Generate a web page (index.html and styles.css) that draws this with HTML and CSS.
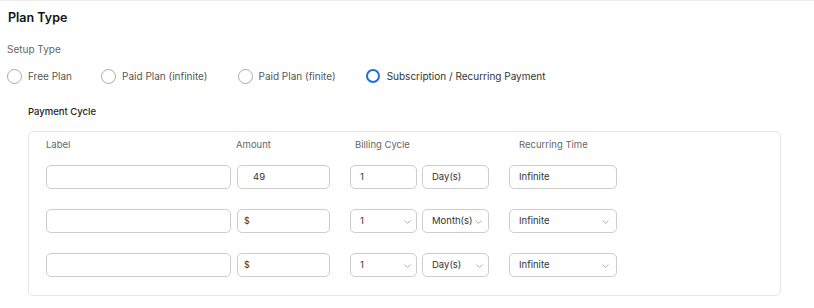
FILE: index.html
```html
<!DOCTYPE html>
<html>
<head>
<meta charset="utf-8">
<link rel="stylesheet" href="styles.css">
</head>
<body>
<div class="page">
  <h1 class="title">Plan Type</h1>
  <div class="setup-label">Setup Type</div>
  <div class="radios">
    <label class="radio"><span class="circle"></span><span class="rtext">Free Plan</span></label>
    <label class="radio"><span class="circle"></span><span class="rtext">Paid Plan (infinite)</span></label>
    <label class="radio"><span class="circle"></span><span class="rtext">Paid Plan (finite)</span></label>
    <label class="radio"><span class="circle checked"></span><span class="rtext">Subscription / Recurring Payment</span></label>
  </div>
  <div class="section">
    <div class="section-title">Payment Cycle</div>
    <div class="box">
      <div class="row head">
        <div class="c-label">Label</div>
        <div class="c-amount">Amount</div>
        <div class="c-billing h-billing">Billing Cycle</div>
        <div class="c-rec h-rec">Recurring Time</div>
      </div>
      <div class="row">
        <div class="c-label field"></div>
        <div class="c-amount field pad-amt">49</div>
        <div class="c-billing">
          <div class="field half">1</div>
          <div class="field half">Day(s)</div>
        </div>
        <div class="c-rec field">Infinite</div>
      </div>
      <div class="row">
        <div class="c-label field"></div>
        <div class="c-amount field pad-dollar">$</div>
        <div class="c-billing">
          <div class="field half sel">1<svg class="chev chev-num" width="7" height="4" viewBox="0 0 7 4"><path d="M0.5 0.5 L3.5 3.3 L6.5 0.5" fill="none" stroke="#a8a8a8" stroke-width="0.9"/></svg></div>
          <div class="field half sel">Month(s)<svg class="chev chev-month" width="7" height="4" viewBox="0 0 7 4"><path d="M0.5 0.5 L3.5 3.3 L6.5 0.5" fill="none" stroke="#a8a8a8" stroke-width="0.9"/></svg></div>
        </div>
        <div class="c-rec field sel">Infinite<svg class="chev chev-rec" width="7" height="4" viewBox="0 0 7 4"><path d="M0.5 0.5 L3.5 3.3 L6.5 0.5" fill="none" stroke="#a8a8a8" stroke-width="0.9"/></svg></div>
      </div>
      <div class="row">
        <div class="c-label field"></div>
        <div class="c-amount field pad-dollar">$</div>
        <div class="c-billing">
          <div class="field half sel">1<svg class="chev chev-num" width="7" height="4" viewBox="0 0 7 4"><path d="M0.5 0.5 L3.5 3.3 L6.5 0.5" fill="none" stroke="#a8a8a8" stroke-width="0.9"/></svg></div>
          <div class="field half sel">Day(s)<svg class="chev chev-day" width="7" height="4" viewBox="0 0 7 4"><path d="M0.5 0.5 L3.5 3.3 L6.5 0.5" fill="none" stroke="#a8a8a8" stroke-width="0.9"/></svg></div>
        </div>
        <div class="c-rec field sel">Infinite<svg class="chev chev-rec" width="7" height="4" viewBox="0 0 7 4"><path d="M0.5 0.5 L3.5 3.3 L6.5 0.5" fill="none" stroke="#a8a8a8" stroke-width="0.9"/></svg></div>
      </div>
    </div>
  </div>
</div>
</body>
</html>
```

FILE: styles.css
```css
* { box-sizing: border-box; }
html, body { margin: 0; padding: 0; background: #fff; }
body {
  font-family: Inter, "Noto Sans", sans-serif;
  color: #333;
  width: 814px;
  height: 308px;
  overflow: hidden;
}
.page {
  border-top: 1px solid #ececec;
  padding: 0 0 0 7px;
}
.title {
  margin: 9px 0 0 1px;
  font-size: 12.5px;
  line-height: 16px;
  font-weight: 600;
  color: #111;
}
.setup-label {
  margin-top: 16px;
  font-size: 10px;
  line-height: 14px;
  color: #666;
}
.radios {
  display: flex;
  align-items: center;
  margin-top: 12px;
  height: 16px;
}
.radio {
  display: flex;
  align-items: center;
  font-size: 10px;
  color: #555;
}
.radio + .radio { margin-left: 29px; }
.radio:nth-child(3) { margin-left: 30px; }
.circle {
  width: 15px;
  height: 15px;
  border: 1px solid #a9a9a9;
  border-radius: 50%;
  margin-right: 6px;
}
.circle.checked {
  width: 14px;
  height: 14px;
  border: 2.5px solid #1d6fd6;
}
.radio:nth-child(4) { margin-left: 30px; }
.radio:nth-child(4) .circle { margin-right: 7px; }
.radio:nth-child(4) .rtext { color: #333; }

.section { padding-left: 21px; padding-right: 33px; }
.section-title {
  margin-top: 21px;
  font-size: 9.5px;
  line-height: 14px;
  font-weight: 500;
  color: #222;
}
.box {
  margin-top: 12px;
  width: 753px;
  border: 1px solid #e6e6e6;
  border-radius: 5px;
  padding: 6px 17px 18px 17px;
  display: flex;
  flex-direction: column;
  gap: 20px;
}
.row { display: flex; align-items: center; }
.row.head {
  font-size: 9.5px;
  line-height: 14px;
  color: #666;
  margin-bottom: -7px;
}
.c-label { width: 185px; margin-right: 6px; }
.c-amount { width: 93px; margin-right: 20px; }
.c-billing { width: 139px; margin-right: 20px; display: flex; gap: 5px; }
.c-rec { width: 108px; }
.head .c-amount { margin-left: -1px; margin-right: 21px; }
.h-billing { padding-left: 5px; }
.h-rec { padding-left: 10px; }

.field {
  position: relative;
  height: 24px;
  border: 1px solid #cdcdcd;
  border-radius: 5px;
  font-size: 9.5px;
  line-height: 22px;
  color: #333;
  padding-left: 9px;
}
.half { width: 67px; }
.pad-amt { padding-left: 15px; }
.pad-dollar { padding-left: 6px; font-size: 9px; }
.chev { position: absolute; top: 10px; }
.chev-num { left: 53px; }
.chev-month { left: 52px; }
.chev-day { left: 53px; }
.chev-rec { left: 92px; }
```
